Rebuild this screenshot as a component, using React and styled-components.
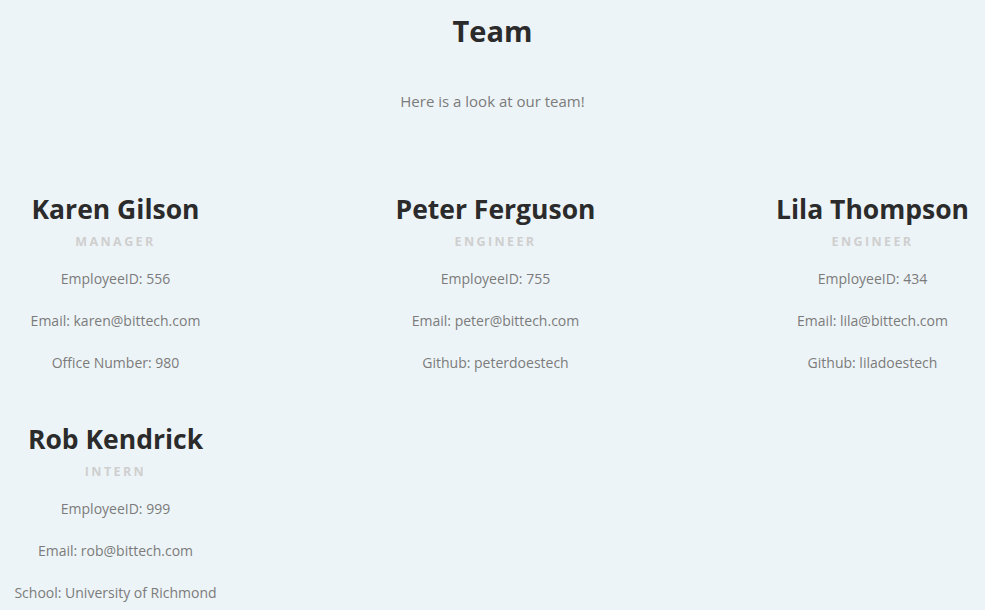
import styled, {createGlobalStyle} from "styled-components";

const team = [
  {name: "Karen Gilson", role: "Manager", id: 556, email: "karen@bittech.com", extra: "Office Number: 980"},
  {name: "Peter Ferguson", role: "Engineer", id: 755, email: "peter@bittech.com", extra: "Github: peterdoestech"},
  {name: "Lila Thompson", role: "Engineer", id: 434, email: "lila@bittech.com", extra: "Github: liladoestech"},
  {name: "Rob Kendrick", role: "Intern", id: 999, email: "rob@bittech.com", extra: "School: University of Richmond"},
];

function App() {
  return (
    <>
      <GlobalStyle/>
      <Header>
        <Title>Team</Title>
        <Subtitle>Here is a look at our team!</Subtitle>
      </Header>
      <Grid>
        {team.map(member => (
          <Card key={member.id}>
            <Name>{member.name}</Name>
            <Role>{member.role}</Role>
            <Info>EmployeeID: {member.id}</Info>
            <Info>Email: {member.email}</Info>
            <Info>{member.extra}</Info>
          </Card>
        ))}
      </Grid>
    </>
  );
}

const GlobalStyle = createGlobalStyle`
  body {
    margin: 0;
    background: #edf4f7;
    font-family: "Open Sans", "Noto Sans", sans-serif;
  }
`

const Header = styled.header`
  text-align: center;
  padding-top: 12px;
`

const Title = styled.h1`
  margin: 0;
  font-size: 29px;
  line-height: 38px;
  font-weight: 700;
  color: #2b2b2b;
`

const Subtitle = styled.p`
  margin: 40px 0 0;
  font-size: 15px;
  line-height: 22px;
  color: #7b7b7b;
`

const Grid = styled.section`
  display: grid;
  grid-template-columns: 231px 529px 1fr;
  margin-top: 79px;
`

const Card = styled.article`
  display: flex;
  flex-direction: column;
  align-items: center;
  text-align: center;
  height: 230px;
`

const Name = styled.h2`
  margin: 0;
  font-size: 26.5px;
  line-height: 36px;
  font-weight: 700;
  color: #2b2b2b;
  white-space: nowrap;
`

const Role = styled.h3`
  margin: 1px 0 2px;
  font-size: 12.5px;
  line-height: 28px;
  font-weight: 700;
  letter-spacing: 2.4px;
  text-transform: uppercase;
  color: #cfcfcf;
`

const Info = styled.p`
  margin: 0;
  font-size: 14px;
  line-height: 42px;
  color: #7b7b7b;
  white-space: nowrap;
`

export default App;
